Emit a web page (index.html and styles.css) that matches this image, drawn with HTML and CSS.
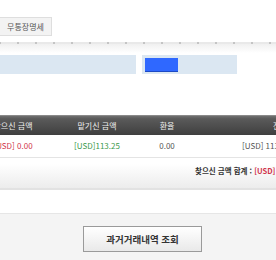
FILE: index.html
```html
<!DOCTYPE html>
<html lang="ko">
<head>
    <meta charset="UTF-8">
    <title>무통장명세</title>
    <link rel="stylesheet" href="styles.css">
</head>
<body>
    <div class="tabs">
        <span class="tab">무통장명세</span>
    </div>
    <div class="divider"></div>

    <div class="search">
        <div class="search-box"></div>
        <div class="search-box short">
            <button type="button" class="search-btn"></button>
        </div>
    </div>

    <div class="list">
        <div class="row head">
            <div class="cell">찾으신 금액</div>
            <div class="cell">맡기신 금액</div>
            <div class="cell">환율</div>
            <div class="cell last">잔액</div>
        </div>
        <div class="row data">
            <div class="cell red">[USD] 0.00</div>
            <div class="cell green">[USD]113.25</div>
            <div class="cell">0.00</div>
            <div class="cell last">[USD] 113.25</div>
        </div>
    </div>

    <div class="total">
        찾으신 금액 합계 : <span class="red">[USD] 0.00</span>
    </div>

    <div class="footer">
        <button type="button" class="history-btn">과거거래내역 조회</button>
    </div>
</body>
</html>
```

FILE: styles.css
```css
body {
    margin: 0;
    width: 276px;
    height: 260px;
    overflow: hidden;
    background-color: #fff;
    font-family: "Noto Sans CJK KR", "Noto Sans", sans-serif;
    color: #555;
}
.tabs {
    padding-top: 11px;
    height: 20px;
}
.tab {
    display: inline-block;
    box-sizing: border-box;
    width: 52px;
    height: 19px;
    line-height: 17px;
    text-align: center;
    font-size: 8px;
    color: #555;
    background-color: #f3f3f3;
    border: 1px solid #dedede;
    border-left: none;
}
.divider {
    margin-top: 11px;
    height: 11px;
    background:
        repeating-linear-gradient(90deg, #c4c4c4 0 1px, #e9e9e9 1px 17px, #c4c4c4 17px 18px) top / 100% 2px no-repeat,
        linear-gradient(#f0f0f0, #fff) 0 2px / 100% 9px no-repeat;
}
.search {
    display: flex;
    gap: 6px;
    margin-top: 2px;
}
.search-box {
    width: 136px;
    height: 19px;
    background-color: #dbe7f2;
}
.search-box.short {
    width: 95px;
    box-sizing: border-box;
    padding: 3px 0 0 3px;
}
.search-btn {
    display: block;
    width: 33px;
    height: 14px;
    padding: 0;
    border: none;
    border-bottom: 1px solid #1c49c4;
    background-color: #2f68ff;
}
.list {
    margin-top: 41px;
    margin-left: -47px;
}
.row {
    display: grid;
    grid-template-columns: 120px 48px 92px 120px;
    font-size: 8px;
    text-align: center;
}
.head {
    height: 20px;
    line-height: 20px;
    color: #eee;
    background: linear-gradient(#707070, #5a5a5a 15%, #3f3f3f);
    border-top: 1px solid #8a8a8a;
    box-sizing: border-box;
}
.data {
    height: 23px;
    line-height: 22px;
    border-bottom: 1px solid #e4e4e4;
    box-sizing: border-box;
}
.cell {
    white-space: nowrap;
}
.head .last {
    text-align: left;
    padding-left: 60px;
}
.data .last {
    text-align: left;
    padding-left: 29px;
}
.red {
    color: #d0344a;
}
.green {
    color: #3c9a4c;
}
.total {
    height: 32px;
    box-sizing: border-box;
    padding-left: 195px;
    line-height: 26px;
    font-size: 7.5px;
    font-weight: bold;
    color: #333;
    white-space: nowrap;
    background: linear-gradient(#fff 20%, #ececec);
    border-bottom: 2px solid #e2e2e2;
}
.footer {
    margin-top: 23px;
    height: 47px;
    border-top: 1px solid #e6e6e6;
    background-color: #f4f4f4;
    display: flex;
    justify-content: center;
    padding: 12px 0 0 9px;
    box-sizing: border-box;
}
.history-btn {
    width: 119px;
    height: 26px;
    padding: 0;
    font-family: inherit;
    font-size: 9.5px;
    font-weight: bold;
    color: #333;
    background: linear-gradient(#fff, #e9e9e9);
    border: 1px solid #9a9a9a;
}
```
